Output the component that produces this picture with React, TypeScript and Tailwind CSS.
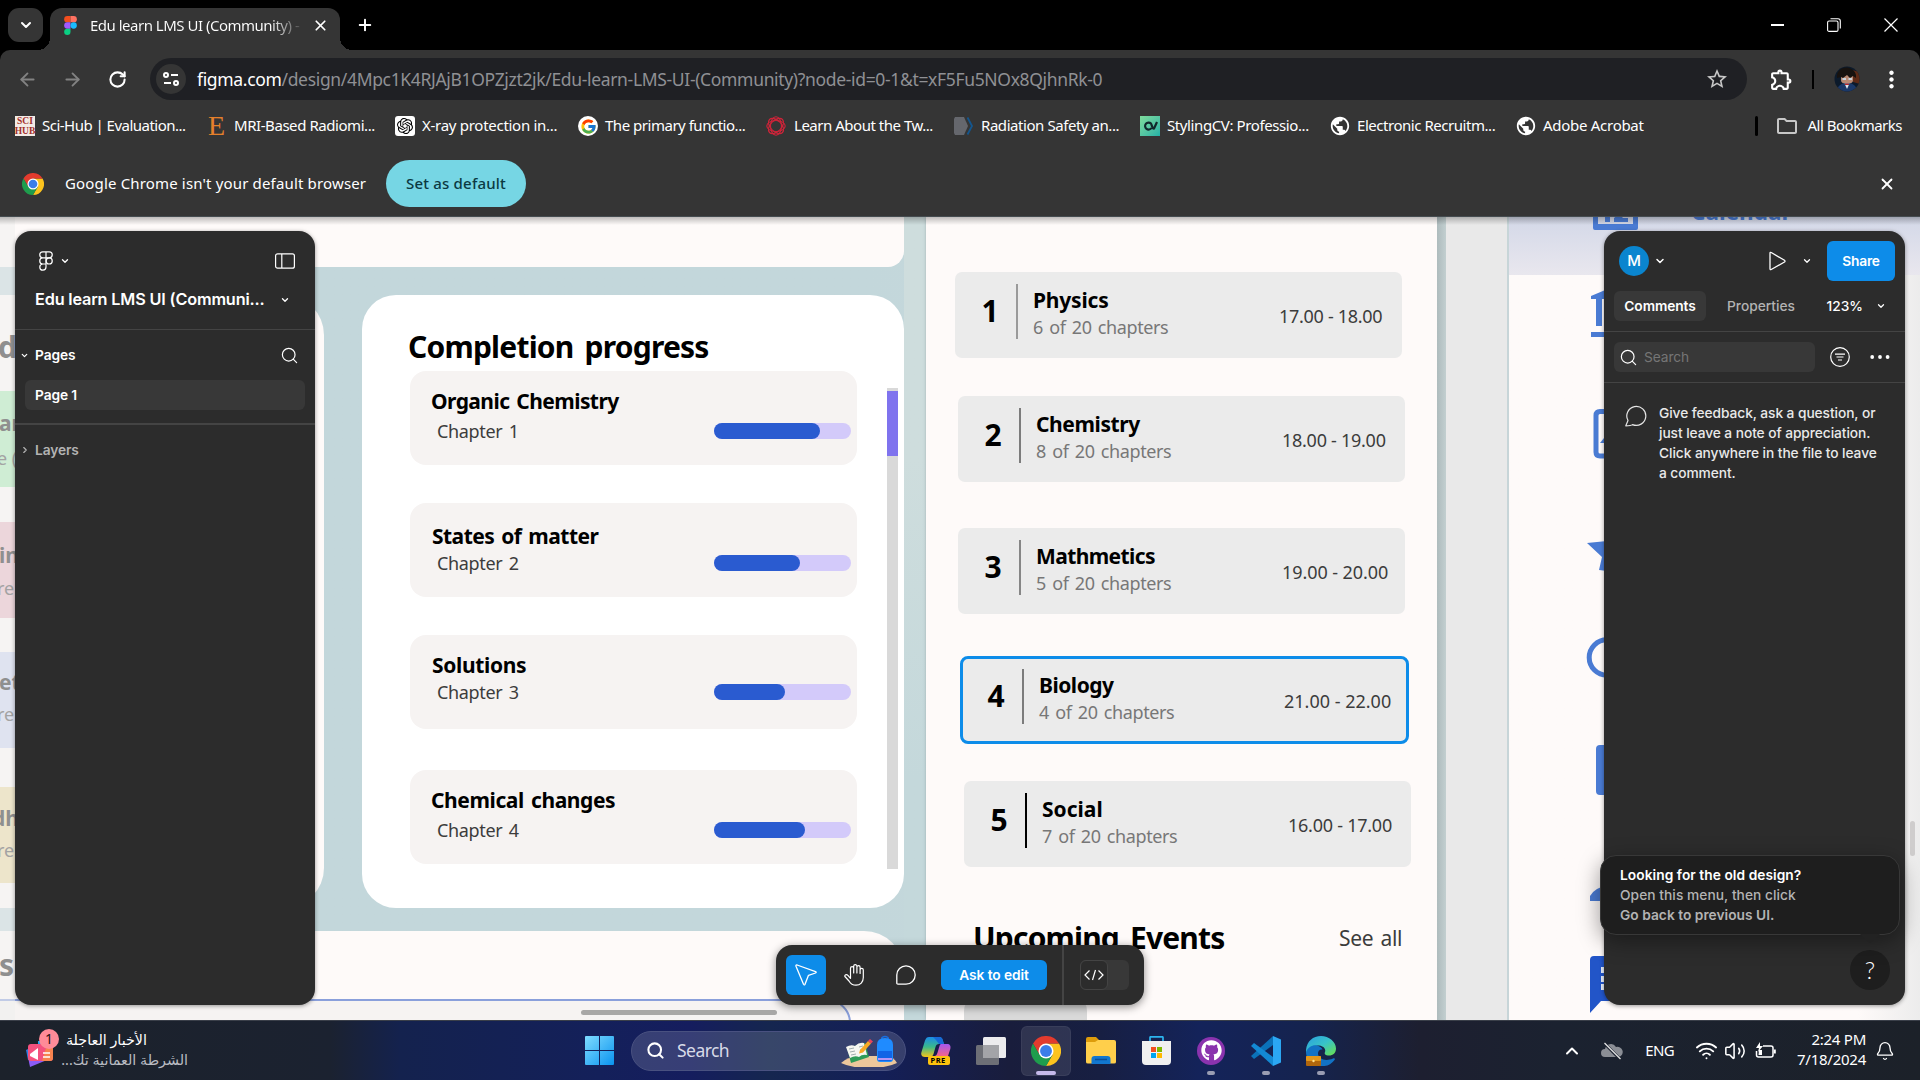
import React from "react";
import { ArrowLeft, ArrowRight, ChevronDown, ChevronRight, ChevronUp, Plus, RotateCw, Search, X, Bell, Wifi, Volume2 } from "lucide-react";
import { MdOutlineExtension, MdStarBorder, MdOutlineFolder, MdPublic, MdMoreVert } from "react-icons/md";
import { SiOpenai } from "react-icons/si";
import { FcGoogle } from "react-icons/fc";
import { FaGithub } from "react-icons/fa";

/* ---------- brand marks ---------- */

function FigmaMark({ className }: { className: string }) {
  return (
    <svg viewBox="0 0 12 18" className={className}>
      <path d="M3 0h3v6H3a3 3 0 0 1 0-6z" fill="#f24e1e" />
      <path d="M6 0h3a3 3 0 0 1 0 6H6z" fill="#ff7262" />
      <path d="M3 6h3v6H3a3 3 0 0 1 0-6z" fill="#a259ff" />
      <circle cx="9" cy="9" r="3" fill="#1abcfe" />
      <path d="M3 12h3v3a3 3 0 1 1-3-3z" fill="#0acf83" />
    </svg>
  );
}

function FigmaOutline() {
  return (
    <svg viewBox="0 0 14 20" className="h-5 w-3.5" fill="none" stroke="#fff" strokeWidth="1.2">
      <path d="M7 .8H3.8a3 3 0 0 0 0 6.1H7zM7 .8h3.2a3 3 0 0 1 0 6.1H7zM7 6.9H3.8a3 3 0 0 0 0 6.1H7zM3.8 13A3.1 3.1 0 1 0 7 16.100V13z" />
      <circle cx="10.200" cy="9.950" r="3.050" />
    </svg>
  );
}

function ChromeMark({ className }: { className: string }) {
  return (
    <svg viewBox="0 0 48 48" className={className}>
      <path d="M34.400 30 24 48A24 24 0 0 0 44.800 12H24z" fill="#fcc31e" />
      <path d="M3.200 12A24 24 0 0 1 44.800 12H24L13.600 30z" fill="#e33b2e" />
      <path d="M3.200 12 13.600 30 24 36l10.400-6L24 48A24 24 0 0 1 3.200 12z" fill="#1f9d4d" />
      <circle cx="24" cy="24" r="12" fill="#fff" />
      <circle cx="24" cy="24" r="9.500" fill="#3b7de9" />
    </svg>
  );
}

function VsCodeMark() {
  return (
    <svg viewBox="0 0 30 30" className="size-[30px]">
      <path d="M22 0 0 20l3 3L22 9z" fill="#0b72b9" />
      <path d="M0 10l3-3L22 21v9z" fill="#1389d3" />
      <path d="M22 0l8 3.500v23L22 30z" fill="#2ba7f3" />
    </svg>
  );
}

function EdgeMark() {
  return (
    <svg viewBox="0 0 30 30" className="size-[30px]">
      <defs>
        <linearGradient id="edgeTop" x1="0" x2="1" y1="0" y2="1">
          <stop offset="0" stopColor="#2a9fe0" />
          <stop offset=".5" stopColor="#38c3c8" />
          <stop offset="1" stopColor="#6be04a" />
        </linearGradient>
      </defs>
      <path d="M0 14C1 5 7 0 15 0s15 6 15 12.500c0 4.500-3 7-7 7-3.500 0-5-1.500-4-3.500 1-2.500-1-6-6-6.500C8 9 3 12 0 18z" fill="url(#edgeTop)" />
      <path d="M0 16c2-5 7-7.500 11-6.500 3 .5 5 2.500 5.500 4-3-.5-4.500 1.500-4.500 4 0 5 7 8.500 15 5 1.500-.5 2.500 0 1.500 1.500A15 15 0 0 1 15 30C6 30 0 24 0 16z" fill="#1272c4" />
      <rect x="0" y="20" width="15" height="10" rx="1" fill="#b0660c" />
      <rect x="0" y="20" width="15" height="5" rx="1" fill="#e3971a" />
      <circle cx="7.500" cy="25" r="1.200" fill="#ffe08a" />
    </svg>
  );
}

function CopilotMark() {
  return (
    <svg viewBox="0 0 30 30" className="h-[30px] w-[30px]">
      <defs>
        <linearGradient id="copA" x1="0" x2="0" y1="0" y2="1">
          <stop offset="0" stopColor="#1b8ce8" />
          <stop offset=".5" stopColor="#3bb98a" />
          <stop offset="1" stopColor="#f5c518" />
        </linearGradient>
        <linearGradient id="copB" x1="0" x2="0" y1="0" y2="1">
          <stop offset="0" stopColor="#a557f0" />
          <stop offset="1" stopColor="#f2668a" />
        </linearGradient>
      </defs>
      <path d="M8 1h10c3 0 3.500 2 4 4l1 3h-5c-2 0-3 1-3.500 3l-2 7c-.5 2-2 3-4 3H4c-3 0-4.500-2-3.500-5L4 4.500C5 2 6 1 8 1z" fill="url(#copA)" />
      <path d="M12 1h6c3 0 3.500 2 4 4l1 3h-5l-3-4z" fill="#1769d6" />
      <path d="M20 8h6c3 0 4 2 3.300 5L27 20H14c2-1 2-2 3-5l1.500-5c.3-1 .7-2 1.500-2z" fill="url(#copB)" />
      <rect x="7" y="20" width="22" height="9" rx="2" fill="#fdc30d" />
    </svg>
  );
}

/* ---------- browser chrome ---------- */

function TabStrip() {
  return (
    <div className="flex h-[50px] bg-black pl-2 text-white">
      <div className="mt-2 flex h-[34px] w-[35px] items-center justify-center rounded-[11px] bg-[#353535]">
        <ChevronDown className="size-4" strokeWidth={3} />
      </div>
      <div className="relative ml-[7px] mt-2 flex h-[42px] w-[290px] items-center rounded-t-[12px] bg-[#353535] pl-[14px] pb-2">
        <div className="absolute -left-3 bottom-0 size-3 bg-[radial-gradient(circle_at_0_0,transparent_12px,#353535_12px)]" />
        <div className="absolute -right-3 bottom-0 size-3 bg-[radial-gradient(circle_at_100%_0,transparent_12px,#353535_12px)]" />
        <FigmaMark className="h-[19px] w-[13px]" />
        <div className="ml-[13px] w-[212px] whitespace-nowrap bg-gradient-to-r from-white from-85% to-[#454545] bg-clip-text text-[15px] tracking-[-0.5px] text-transparent">
          Edu learn LMS UI (Community) -
        </div>
        <X className="ml-[10px] size-[17px]" strokeWidth={2.4} />
      </div>
      <Plus className="ml-[16px] mt-4 size-[18px]" strokeWidth={2.6} />
      <div className="ml-auto flex items-center pr-[22px]">
        <div className="h-[1.500px] w-[13px] bg-white" />
        <svg viewBox="0 0 14 14" className="ml-[43px] size-[14px]" fill="none" stroke="#fff" strokeWidth="1.100">
          <rect x=".6" y="3" width="10.400" height="10.400" rx="1.500" />
          <path d="M3.500 .7h7.500a2.300 2.300 0 0 1 2.300 2.300v7.500" />
        </svg>
        <svg viewBox="0 0 14 14" className="ml-[43px] size-[14px]" stroke="#fff" strokeWidth="1.200">
          <path d="M.5 .5l13 13M13.500 .5l-13 13" />
        </svg>
      </div>
    </div>
  );
}

function AddressBar() {
  return (
    <div className="flex h-[58px] items-center rounded-t-[10px] bg-[#353535] pl-[17px]">
      <ArrowLeft className="size-[21px] text-[#828282]" strokeWidth={2.1} />
      <ArrowRight className="ml-[24px] size-[21px] text-[#828282]" strokeWidth={2.1} />
      <RotateCw className="ml-[25px] size-[19px] text-white" strokeWidth={2.6} />
      <div className="ml-[23px] flex h-[42px] w-[1597px] items-center rounded-full bg-[#1f2024] pl-[6px]">
        <div className="flex size-[30px] items-center justify-center rounded-full bg-[#353535]">
          <svg viewBox="0 0 16 14" className="h-[14px] w-4" fill="none" stroke="#fff" strokeWidth="2">
            <circle cx="3" cy="3" r="2" />
            <path d="M8 3h7M1 11h7" />
            <circle cx="13" cy="11" r="2" />
          </svg>
        </div>
        <div className="ml-[11px] whitespace-nowrap text-[17.500px] tracking-[-0.335px] text-[#8f9094]">
          <span className="text-white">figma.com</span>/design/4Mpc1K4RJAjB1OPZjzt2jk/Edu-learn-LMS-UI-(Community)?node-id=0-1&amp;t=xF5Fu5NOx8QjhnRk-0
        </div>
        <MdStarBorder className="ml-auto mr-[18px] size-[24px] text-[#c7c7c7]" />
      </div>
      <MdOutlineExtension className="ml-[22px] size-[25px] text-white" />
      <div className="ml-[18px] h-[19px] w-[2px] bg-black" />
      <svg viewBox="0 0 26 26" className="ml-5 size-[26px]">
        <defs>
          <clipPath id="avatarClip"><circle cx="13" cy="13" r="12.500" /></clipPath>
        </defs>
        <g clipPath="url(#avatarClip)">
          <rect width="26" height="26" fill="#0c1a2b" />
          <path d="M18 4l8 2v12l-7-2z" fill="#5e2a16" />
          <path d="M7 9h12v5c0 3-3 4-6 4s-6-1-6-4z" fill="#b98a74" />
          <path d="M3 12C2 5 8 1 13 1.500S23 6 22 12l-3-2-3 2-3-3-4 3-2-1z" fill="#17120f" />
          <path d="M8.500 12h3.500v2H8.500zM14.500 12H18v2h-3.500z" fill="#c9d3dc" />
          <path d="M3 26c0-6 4-9 10-9s10 3 10 9z" fill="#1b3868" />
          <path d="M10.500 17.500h5L13 23z" fill="#dfe6ee" />
          <path d="M11 17.500h4v1.500h-4z" fill="#b2272d" />
        </g>
      </svg>
      <MdMoreVert className="ml-[18px] size-[27px] text-white" />
    </div>
  );
}

function Globe() {
  return <MdPublic className="size-[22px] text-white" />;
}

const bookmarks = [
  {
    box: "w-[193px]",
    gap: "ml-[7px] tracking-[-0.52px]",
    text: "Sci-Hub | Evaluation...",
    icon: (
      <div className="flex size-5 flex-col items-center justify-center bg-[#f3ebe6] font-[Liberation_Serif] text-[9.500px] font-bold leading-[10px] text-[#a3302b]">
        <span>SCI</span>
        <span>HUB</span>
      </div>
    ),
  },
  { box: "w-[187px]", gap: "ml-[8px] tracking-[-0.44px]", text: "MRI-Based Radiomi...", icon: <div className="w-[18px] font-[Liberation_Serif] text-[28px] leading-5 text-[#e5802b]">E</div> },
  {
    box: "w-[183px]",
    gap: "ml-[7px] tracking-[-0.28px]",
    text: "X-ray protection in...",
    icon: (
      <div className="flex size-5 items-center justify-center rounded-[3px] bg-white">
        <SiOpenai className="size-[16px] text-black" />
      </div>
    ),
  },
  {
    box: "w-[188px]",
    gap: "ml-[7px] tracking-[-0.48px]",
    text: "The primary functio...",
    icon: (
      <div className="flex size-5 items-center justify-center rounded-full bg-white">
        <FcGoogle className="size-[17px]" />
      </div>
    ),
  },
  {
    box: "w-[188px]",
    gap: "ml-[8px] tracking-[-0.48px]",
    text: "Learn About the Tw...",
    icon: (
      <svg viewBox="0 0 20 20" className="size-5" fill="none" stroke="#cf2439" strokeWidth="1.100">
        <ellipse cx="10" cy="10" rx="9.200" ry="5.500" />
        <ellipse cx="10" cy="10" rx="9.200" ry="5.500" transform="rotate(45 10 10)" />
        <ellipse cx="10" cy="10" rx="9.200" ry="5.500" transform="rotate(90 10 10)" />
        <ellipse cx="10" cy="10" rx="9.200" ry="5.500" transform="rotate(135 10 10)" />
      </svg>
    ),
  },
  {
    box: "w-[186px]",
    gap: "ml-[7px] tracking-[-0.44px]",
    text: "Radiation Safety an...",
    icon: (
      <svg viewBox="0 0 20 20" className="size-5">
        <path d="M1 1h9l4 9-4 9H1L0 17V3z" fill="#65676d" />
        <path d="M13.500 1.500 18 10l-4.500 8.500" fill="none" stroke="#13568f" strokeWidth="1.800" />
      </svg>
    ),
  },
  {
    box: "w-[190px]",
    gap: "ml-[7px] tracking-[-0.4px]",
    text: "StylingCV: Professio...",
    icon: (
      <div className="flex size-5 items-center justify-center bg-gradient-to-br from-[#7fdc9c] to-[#1fb2a6]">
        <svg viewBox="0 0 16 10" className="h-[10px] w-4" fill="none" stroke="#12272c" strokeWidth="2.200">
          <path d="M9.500 7A3.500 3.500 0 1 1 9 2.500C10 4 10 8 12 7.500L15 1" />
        </svg>
      </div>
    ),
  },
  { box: "-ml-[1px] w-[186px]", gap: "ml-[6px] tracking-[-0.46px]", text: "Electronic Recruitm...", icon: <Globe /> },
  { box: "w-[160px]", gap: "ml-[6px] tracking-[-0.28px]", text: "Adobe Acrobat", icon: <Globe /> },
];

function BookmarksBar() {
  return (
    <div className="flex h-9 items-center bg-[#353535] pl-[15px] text-[15px] text-white">
      {bookmarks.map((b) => (
        <div key={b.text} className={"flex shrink-0 items-center whitespace-nowrap " + b.box}>
          {b.icon}
          <span className={"-mt-[2px] " + b.gap}>{b.text}</span>
        </div>
      ))}
      <div className="ml-auto mr-[17px] h-5 w-[3px] rounded-full bg-black" />
      <MdOutlineFolder className="size-6 text-[#c7c7c7]" />
      <span className="-mt-[2px] ml-[9px] mr-[18px] tracking-[-0.5px]">All Bookmarks</span>
    </div>
  );
}

function InfoBar() {
  return (
    <div className="flex h-[73px] items-center border-b border-[#454c50] bg-[#353535] pl-[22px] pr-6 pt-[7px] text-[15px] text-white">
      <ChromeMark className="size-[22px]" />
      <span className="ml-[21px] w-[321px] whitespace-nowrap tracking-[0.16px]">Google Chrome isn't your default browser</span>
      <div className="flex h-[47px] w-[140px] items-center justify-center rounded-full bg-[#76d6e4] font-medium tracking-[0.2px] text-[#0b3a42]">Set as default</div>
      <X className="ml-auto size-[18px]" strokeWidth={2.4} />
    </div>
  );
}

/* ---------- design canvas ---------- */

const chapters = [
  { pos: "left-[410px] top-[154px]", title: "Organic Chemistry", titleAt: "left-[21px] top-[20px] tracking-[-0.57px]", sub: "Chapter 1", subAt: "top-[51px]", barAt: "top-[52px]", fill: "w-[106px]" },
  { pos: "left-[410px] top-[286px]", title: "States of matter", titleAt: "left-[22px] top-[23px] tracking-[-0.53px]", sub: "Chapter 2", subAt: "top-[51px]", barAt: "top-[52px]", fill: "w-[86px]" },
  { pos: "left-[410px] top-[418px]", title: "Solutions", titleAt: "left-[22px] top-[20px] tracking-[-0.35px]", sub: "Chapter 3", subAt: "top-[48px]", barAt: "top-[49px]", fill: "w-[71px]" },
  { pos: "left-[410px] top-[553px]", title: "Chemical changes", titleAt: "left-[21px] top-[20px] tracking-[-0.4px]", sub: "Chapter 4", subAt: "top-[51px]", barAt: "top-[52px]", fill: "w-[91px]" },
];

const lessons = [
  { pos: "left-[955px] top-[55px]", n: "1", rule: "bg-[#9a9a9a]", title: "Physics", titleGap: "tracking-[-0.2px]", sub: "6 of 20 chapters", time: "17.00 - 18.00", timeAt: "left-[324px] tracking-[-0.3px]" },
  { pos: "left-[958px] top-[179px]", n: "2", rule: "bg-[#7c7c7c]", title: "Chemistry", titleGap: "tracking-[-0.4px]", sub: "8 of 20 chapters", time: "18.00 - 19.00", timeAt: "left-[324px] tracking-[-0.27px]" },
  { pos: "left-[958px] top-[311px]", n: "3", rule: "bg-[#868686]", title: "Mathmetics", titleGap: "tracking-[-0.6px]", sub: "5 of 20 chapters", time: "19.00 - 20.00", timeAt: "left-[324px] tracking-[-0.08px]" },
  { pos: "left-[961px] top-[440px] outline-[3px] outline-[#0d8ce9] outline-offset-[-2px]", n: "4", rule: "bg-[#7c7c7c]", title: "Biology", titleGap: "tracking-[-0.5px]", sub: "4 of 20 chapters", time: "21.00 - 22.00", timeAt: "left-[323px]" },
  { pos: "left-[964px] top-[564px]", n: "5", rule: "bg-black", title: "Social", titleGap: "tracking-[0px]", sub: "7 of 20 chapters", time: "16.00 - 17.00", timeAt: "left-[324px] tracking-[-0.25px]" },
];

const hiddenCards = [
  { at: "top-[174px] bg-[#cfedd4]", a: "ar", aAt: "-left-[1px] top-[22px]", b: "e (", bAt: "-left-[3px] top-[58px]" },
  { at: "top-[305px] bg-[#ecd6db]", a: "in", aAt: "-left-[1px] top-[23px]", b: "re", bAt: "-left-[3px] top-[57px]" },
  { at: "top-[435px] bg-[#dfe3f0]", a: "et", aAt: "-left-[1px] top-[20px]", b: "re", bAt: "-left-[3px] top-[53px]" },
  { at: "top-[570px] bg-[#ede5cb]", a: "dh", aAt: "-left-[8px] top-[21px]", b: "re", bAt: "-left-[3px] top-[54px]" },
];

function Canvas() {
  return (
    <div className="absolute inset-0 overflow-hidden bg-[#e9e9e9] text-black">
      {/* main frame */}
      <div className="absolute left-0 top-0 h-full w-[1446px] bg-gradient-to-r from-[#c3d7db] from-60% to-[#cbdadb]" />
      <div className="absolute left-[904px] top-0 h-full w-[22px] bg-gradient-to-b from-[#cedddd] from-30% to-[#c4d8db] to-70%" />
      <div className="absolute -left-10 top-0 h-[50px] w-[944px] rounded-br-[16px] bg-[#fefaf9]" />
      <div className="absolute -left-10 top-[78px] h-[613px] w-[364px] rounded-[40px] bg-[#fefaf9]" />
      <div className="absolute -left-10 top-[714px] h-[120px] w-[944px] rounded-tr-[40px] bg-[#fefaf9]" />
      <div className="absolute -left-10 top-[782px] h-[60px] w-[891px] rounded-tr-[24px] border-2 border-[#8a9fdb] bg-[#f6f3f2]" />

      {/* strip visible left of the panel */}
      <div className="absolute left-0 top-0 h-full w-[15px] overflow-hidden whitespace-nowrap text-[#8f8f8f]">
        <div className="absolute inset-0 bg-[#eeeeee]/55" />
        <div className="absolute -right-[2px] top-[115px] text-[30px] font-bold leading-none">rd</div>
        {hiddenCards.map((c) => (
          <div key={c.a} className={"absolute left-0 h-[96px] w-full " + c.at}>
            <div className={"absolute text-[21px] font-bold leading-none " + c.aAt}>{c.a}</div>
            <div className={"absolute text-[18px] leading-none text-[#a3a3a3] " + c.bAt}>{c.b}</div>
          </div>
        ))}
        <div className="absolute right-[1px] top-[733px] text-[30px] font-bold leading-none">s</div>
      </div>

      {/* completion progress */}
      <div className="absolute left-[362px] top-[78px] h-[613px] w-[542px] rounded-[34px] bg-white" />
      <div className="absolute left-[408px] top-[115px] whitespace-nowrap text-[30px] font-bold leading-none tracking-[-0.78px] [word-spacing:4px]">Completion progress</div>
      {chapters.map((c) => (
        <div key={c.title} className={"absolute h-[94px] w-[447px] rounded-[16px] bg-[#f6f3f2] " + c.pos}>
          <div className={"absolute whitespace-nowrap text-[21px] font-bold leading-none [word-spacing:2px] " + c.titleAt}>{c.title}</div>
          <div className={"absolute left-[27px] whitespace-nowrap text-[18px] leading-none tracking-[-0.35px] text-[#3c3c3c] [word-spacing:2px] " + c.subAt}>{c.sub}</div>
          <div className={"absolute left-[304px] h-4 w-[137px] rounded-full bg-[#d3cafa] " + c.barAt}>
            <div className={"h-4 rounded-full bg-[#2a5bd0] " + c.fill} />
          </div>
        </div>
      ))}
      <div className="absolute left-[887px] top-[171px] h-[481px] w-[11px] bg-[#d9d9d9] pt-[3px]">
        <div className="h-[65px] bg-[#7f73ee]" />
      </div>

      {/* schedule column */}
      <div className="absolute left-[926px] top-0 h-full w-[511px] bg-[#fefaf9] shadow-[0_0_3px_rgba(90,100,110,0.35)]" />
      <div className="absolute left-[1437px] top-0 h-full w-[9px] bg-gradient-to-r from-[#aebbbd] to-[#c2cfd0]" />
      {lessons.map((l) => (
        <div key={l.n} className={"absolute h-[86px] w-[447px] rounded-[7px] bg-[#ebebeb] " + l.pos}>
          <div className="absolute left-[25px] top-[24px] w-[20px] text-center text-[30px] font-bold leading-none">{l.n}</div>
          <div className={"absolute left-[61px] top-[12px] h-[55px] w-[1.500px] " + l.rule} />
          <div className={"absolute left-[78px] top-[18px] whitespace-nowrap text-[21px] font-bold leading-none " + l.titleGap}>{l.title}</div>
          <div className="absolute left-[78px] top-[46px] whitespace-nowrap text-[18px] leading-none tracking-[-0.4px] text-[#777] [word-spacing:2px]">{l.sub}</div>
          <div className={"absolute top-[35px] whitespace-nowrap text-[18px] leading-none text-[#3c3c3c] " + l.timeAt}>{l.time}</div>
        </div>
      ))}
      <div className="absolute left-[973px] top-[706px] whitespace-nowrap text-[30px] font-bold leading-none tracking-[-0.82px] [word-spacing:4px]">Upcoming Events</div>
      <div className="absolute left-[1339px] top-[711px] whitespace-nowrap text-[21px] leading-none tracking-[-0.3px] text-[#3c3c3c] [word-spacing:2px]">See all</div>
      <div className="absolute left-[964px] top-[780px] h-[60px] w-[123px] rounded-[14px] bg-[#d9d9d9]" />

      {/* second frame */}
      <div className="absolute left-[1507px] top-0 h-full w-[413px] border-l-2 border-[#c7d5d8] bg-gradient-to-r from-[#fefaf9] from-85% to-[#ececec]" />
      <div className="absolute left-[1509px] top-0 h-[58px] w-[411px] bg-gradient-to-b from-[#d3d8e8] to-[#e9e7ee]" />
      <div className="absolute left-[1691px] -top-[16px] text-[22.500px] font-bold leading-none text-[#4a7bd3]">Calendar</div>
      <svg viewBox="1580 217 60 803" className="absolute left-[1580px] top-0 h-[803px] w-[60px]" fill="#4a7bd3">
        <path d="M1593 210v18q0 2 2 2h41q2 0 2-2v-18h-5v14h-35v-14z" />
        <path d="M1605 210h5v12h-5zM1614 222v-4l8-6h6l-6 6h6v4z" />
        <path d="M1591 296l19-8v11h-8v27h-6v-27h-5zM1591 332h20v5h-20z" />
        <path d="M1600 411.500h20v44.500h-20q-4 0-4-4v-36.500q0-4 4-4z" fill="none" stroke="#4a7bd3" strokeWidth="5" />
        <path d="M1600 443l8-10v10z" />
        <path d="M1587 543l20-2v30l-8-1 3-13z" />
        <circle cx="1607" cy="657.500" r="17.800" fill="none" stroke="#4a7bd3" strokeWidth="5" />
        <rect x="1596" y="745" width="20" height="50" rx="4" />
        <path d="M1590 901v-5q4-8 20-12v17z" />
        <path d="M1594 956h30v45h-23l-11 12v-53q0-4 4-4z" fill="#2255c8" />
        <path d="M1601 967h6v6h-6zM1601 976h6v6h-6zM1601 984h6v6h-6z" fill="#e6ecf8" />
      </svg>
      <div className="absolute inset-x-0 top-0 h-[8px] bg-gradient-to-b from-black/25 to-transparent" />
      <div className="absolute left-[581px] top-[793px] h-[5px] w-[196px] rounded-full bg-[#a8a7a6]" />
      <div className="absolute left-[1910px] top-[604px] h-[35px] w-[5px] rounded-full bg-[#cfcdcd]" />
    </div>
  );
}

/* ---------- editor panels ---------- */

function LeftPanel() {
  return (
    <div className="absolute left-[15px] top-[14px] flex h-[774px] w-[300px] flex-col rounded-[16px] bg-[#2c2c2c] font-[Inter] text-[13.750px] font-semibold tracking-[-0.1px] text-white shadow-[0_1px_4px_rgba(0,0,0,0.4)]">
      <div className="flex h-[60px] items-center pl-6 pr-5">
        <FigmaOutline />
        <ChevronDown className="ml-[7px] size-[10px]" strokeWidth={3.200} />
        <svg viewBox="0 0 20 16" className="ml-auto h-4 w-5" fill="none" stroke="#fff" strokeWidth="1.200">
          <rect x=".6" y=".8" width="18.800" height="14.400" rx="2" />
          <path d="M6.800 1v14" />
        </svg>
      </div>
      <div className="flex h-[39px] items-start border-b border-[#444] pl-5 pr-[25px] text-[16.250px] leading-[18px]">
        <span className="-mt-px whitespace-nowrap tracking-[-0.17px]">Edu learn LMS UI (Communi...</span>
        <ChevronDown className="ml-auto mt-1 size-[10px]" strokeWidth={3.200} />
      </div>
      <div className="flex h-[50px] items-center pl-[5px] pr-[16px]">
        <ChevronDown className="size-[9px]" strokeWidth={3.200} />
        <span className="ml-[6px]">Pages</span>
        <Search className="ml-auto size-[19px]" strokeWidth={1.500} />
      </div>
      <div className="mx-[10px] flex h-[30px] items-center rounded-[6px] bg-[#383838] pl-[10px]">Page 1</div>
      <div className="mt-[13px] h-[2px] bg-[#444]" />
      <div className="flex h-[50px] items-center pl-[5px] text-[#b3b3b3]">
        <ChevronRight className="size-[10px]" strokeWidth={2.800} />
        <span className="ml-[5px]">Layers</span>
      </div>
    </div>
  );
}

function RightPanel() {
  return (
    <div className="absolute left-[1604px] top-[14px] flex h-[774px] w-[301px] flex-col rounded-[16px] bg-[#2c2c2c] font-[Inter] text-[13.750px] font-medium tracking-[-0.1px] text-white shadow-[0_1px_4px_rgba(0,0,0,0.4)]">
      <div className="flex h-[60px] items-center pl-[15px] pr-[10px]">
        <div className="flex size-[30px] items-center justify-center rounded-full bg-[#0a85cf] text-[15px]">M</div>
        <ChevronDown className="ml-[5px] size-[12px]" strokeWidth={3} />
        <svg viewBox="0 0 17 20" className="ml-auto h-5 w-[17px]" fill="none" stroke="#fff" strokeWidth="1.300" strokeLinejoin="round">
          <path d="M1 2.200v15.600q0 1.300 1.200 .7L15.500 11q1-.9 0-1.700L2.200 1.500Q1 1 1 2.200z" />
        </svg>
        <ChevronDown className="ml-[16px] mr-[15px] size-[10px]" strokeWidth={3} />
        <div className="flex h-10 w-[68px] items-center justify-center rounded-[6px] bg-[#0d8ce9] font-semibold tracking-[-0.2px]">Share</div>
      </div>
      <div className="flex h-[41px] border-b border-[#444] pl-[10px] pr-[19px]">
        <div className="flex h-[30px] w-[92px] items-center justify-center rounded-[6px] bg-[#383838] font-semibold tracking-[-0.1px]">Comments</div>
        <div className="ml-[21px] flex h-[30px] items-center tracking-[0px] text-[#b3b3b3]">Properties</div>
        <div className="ml-auto flex h-[30px] items-center tracking-[0px]">123%</div>
        <ChevronDown className="ml-[13px] mt-[10px] size-[10px]" strokeWidth={3} />
      </div>
      <div className="flex h-[51px] items-center border-b border-[#444] pl-[10px]">
        <div className="flex h-[30px] w-[201px] items-center rounded-[6px] bg-[#383838] pl-[5px] font-normal text-[#757575]">
          <Search className="size-[19px] text-white" strokeWidth={1.500} />
          <span className="ml-[6px]">Search</span>
        </div>
        <svg viewBox="0 0 20 20" className="ml-[15px] size-5" fill="none" stroke="#fff" strokeWidth="1.200">
          <circle cx="10" cy="10" r="9.300" />
          <path d="M5 7.200h10M6.500 10h7M8 13h4" />
        </svg>
        <svg viewBox="0 0 20 4" className="ml-5 h-1 w-5" fill="#fff">
          <circle cx="2.200" cy="2" r="1.900" />
          <circle cx="10" cy="2" r="1.900" />
          <circle cx="17.600" cy="2" r="1.900" />
        </svg>
      </div>
      <div className="flex pl-[21px] pt-[20px]">
        <svg viewBox="0 0 22 22" className="mt-[2px] size-[22px]" fill="none" stroke="#e5e5e5" strokeWidth="1.200" strokeLinejoin="round">
          <path d="M.8 20.800 3 15.500A9.500 9.500 0 1 1 7.500 19.600Q6 20.800 .8 20.800z" />
        </svg>
        <div className="ml-[12px] whitespace-nowrap leading-5 tracking-[-0.07px] text-[#e9e9e9]">
          Give feedback, ask a question, or
          <br />
          just leave a note of appreciation.
          <br />
          Click anywhere in the file to leave
          <br />a comment.
        </div>
      </div>
      <div className="mb-[15px] ml-auto mr-[15px] mt-auto flex size-10 items-center justify-center rounded-full bg-[#1e1e1e] font-[Lato] text-[24px] font-light">?</div>
    </div>
  );
}

function Hint() {
  return (
    <div className="absolute left-[1600px] top-[638px] h-[80px] w-[300px] rounded-[16px] border border-[#383838] bg-[#1e1e1e] pl-[19px] pt-[9px] font-[Inter] text-[13.750px] leading-5 text-[#b3b3b3] shadow-[0_6px_22px_rgba(0,0,0,0.4)]">
      <div className="font-semibold tracking-[0.05px] text-white">Looking for the old design?</div>
      <div className="font-medium tracking-[0.05px]">Open this menu, then click</div>
      <div className="font-semibold tracking-[0.02px]">Go back to previous UI.</div>
      <svg viewBox="0 0 20 9" className="absolute left-[259px] top-[78px] h-[9px] w-5" fill="#222">
        <path d="M0 0h20l-8 8q-2 1.500-4 0z" />
      </svg>
    </div>
  );
}

function ToolBar() {
  return (
    <div className="absolute left-[776px] top-[728px] flex h-[60px] w-[368px] items-center rounded-[16px] bg-[#2c2c2c] pl-[10px] font-[Inter] text-white shadow-[0_2px_8px_rgba(0,0,0,0.45)]">
      <div className="flex size-10 items-center justify-center rounded-[6px] bg-[#0d8ce9]">
        <svg viewBox="0 0 22 22" className="size-[22px]" fill="none" stroke="#fff" strokeWidth="1.300" strokeLinejoin="round">
          <path d="M1 2.200Q.5 .6 2.100 1L20.500 7.600q1.400.7 0 1.400l-7 2.300-3.500 9q-.8 1.300-1.500 0z" />
        </svg>
      </div>
      <svg viewBox="0 0 22 22" className="ml-[18px] size-[22px]" fill="none" stroke="#fff" strokeWidth="1.200" strokeLinecap="round" strokeLinejoin="round">
        <path d="M6.500 11.500V4.200a1.600 1.600 0 0 1 3.200 0V9M9.700 9V2.300a1.600 1.600 0 0 1 3.200 0V9M12.900 9V3.300a1.600 1.600 0 0 1 3.200 0V9.500M16.100 9V6a1.600 1.600 0 0 1 3.200 0v7.500c0 4.500-3 7.700-7.300 7.700-4 0-5.500-1.500-7-4.200L.9 12.500c-.5-1.500 1.500-2.700 3-1.200l2.600 3v-3" />
      </svg>
      <svg viewBox="0 0 20 20" className="ml-[30px] size-5" fill="none" stroke="#fff" strokeWidth="1.300">
        <path d="M.8 18V10A9.200 9.200 0 1 1 10 19.200H2Q.8 19.200 .8 18z" />
      </svg>
      <div className="ml-[25px] flex h-[30px] w-[106px] items-center justify-center rounded-[6px] bg-[#0d8ce9] text-[13.750px] font-semibold tracking-[-0.1px]">Ask to edit</div>
      <div className="ml-[15px] h-full w-[2px] bg-[#444]" />
      <div className="ml-4 h-[30px] w-[49px] rounded-[6px] bg-[#383838]">
        <div className="flex h-[30px] w-[28px] items-center justify-center rounded-[6px] border border-[#444] bg-[#2c2c2c]">
          <svg viewBox="0 0 20 12" className="h-3 w-5" fill="none" stroke="#fff" strokeWidth="1.200">
            <path d="M5.500 1.500 1 6l4.500 4.500M14.500 1.500 19 6l-4.500 4.500M11.500 1l-3 10" />
          </svg>
        </div>
      </div>
    </div>
  );
}

/* ---------- windows taskbar ---------- */

function TaskApp({ children, active, running }: { children: React.ReactNode; active?: boolean; running?: boolean }) {
  return (
    <div className={"relative mr-[5px] flex h-[50px] w-[50px] items-center justify-center rounded-[6px] " + (active ? "border border-white/5 bg-white/10" : "")}>
      {children}
      {active && <div className="absolute bottom-0 h-1 w-5 rounded-full bg-[#c4b9ea]" />}
      {running && <div className="absolute bottom-[1px] h-1 w-2 rounded-full bg-[#9a9db3]" />}
    </div>
  );
}

function TaskBar() {
  return (
    <div className="flex h-[60px] items-center border-t border-[#3a3f49] bg-[linear-gradient(90deg,#1c222b_0px,#1b2230_330px,#14224e_400px,#14205a_600px,#151d5e_690px,#15264f_770px,#141f58_880px,#191d3c_1010px,#171f42_1100px,#14235a_1200px,#15234e_1310px,#1d1f30_1420px,#1b2230_1560px,#1c2129_1920px)] text-white">
      <div className="flex w-[585px] items-center pl-[26px]">
        <div className="relative -mt-[4px] h-9 w-[29px]">
          <svg viewBox="0 0 28 28" className="absolute bottom-0 left-0 size-[28px]">
            <path d="M2 18l19 3-17 7z" fill="#8b5cf6" />
            <path d="M0 11l4-2v12H2z" fill="#2f7de0" />
            <path d="M12 2h8v6h-8z" fill="#22a6f2" />
            <rect x="2" y="5" width="25" height="17" rx="3" fill="#f4517f" />
            <path d="M20 9h7v10a3 3 0 0 1-3 3h-8z" fill="#f7834f" />
            <path d="M4 15l8-6v12l-8-4z" fill="#fff" />
            <path d="M17 14h7M17 18h7" stroke="#fff" strokeWidth="1.600" />
          </svg>
          <div className="absolute -top-[2px] left-[13px] flex size-5 items-center justify-center rounded-full bg-[#ff8b98] text-[14px] text-[#2a1012]">1</div>
        </div>
        <div className="-mt-[2px] ml-[10px] w-[123px] whitespace-nowrap text-[14.300px] leading-5">
          <div dir="rtl" className="w-[82px]">الأخبار العاجلة</div>
          <div dir="rtl" className="w-[123px] text-[#b9bcc2]">الشرطة العمانية تك...</div>
        </div>
      </div>
      <svg viewBox="0 0 29 29" className="size-[29px]">
        <defs>
          <linearGradient id="winGrad" x1="0" x2="1" y1="0" y2="1">
            <stop offset="0" stopColor="#7fdcff" />
            <stop offset="1" stopColor="#0a93ef" />
          </linearGradient>
        </defs>
        <path d="M0 1q0-1 1-1h13v14H0zM15 0h13q1 0 1 1v13H15zM0 15h14v14H1q-1 0-1-1zM15 15h14v13q0 1-1 1H15z" fill="url(#winGrad)" />
      </svg>
      <div className="ml-[17px] mr-[5px] flex h-10 w-[275px] items-center rounded-full border border-[#495180] bg-white/15 pl-[14px] text-[17.500px] text-[#d8dbe8]">
        <Search className="size-[19px] text-white" strokeWidth={2.600} />
        <span className="ml-[12px] tracking-[-0.55px]">Search</span>
        <svg viewBox="0 0 58 32" className="ml-auto mr-[7px] h-8 w-[58px]">
          <path d="M1 28q6-6 18-7h24q12 1 14 7-10 5-28 5T1 28z" fill="#ecc79b" />
          <path d="M7 13l18-5 4 14-18 6z" fill="#2e9c57" />
          <path d="M6 12q5-3 9-1 4-4 9-3l3 12q-5-1-8 2-4-2-9 1z" fill="#f5f6f0" />
          <path d="M9 14l5-1M10 17l5-1M11 20l5-1M19 12l4-1M20 15l4-1" stroke="#8a9a9a" strokeWidth=".8" />
          <path d="M20 15l8-9 3 2.500-8 9-4 1z" fill="#f7a823" />
          <path d="M28 6l2-2 3 2.500-2 2z" fill="#e8455a" />
          <path d="M42 4V2.500Q45 .5 48 2.500V4" fill="none" stroke="#1a6ee0" strokeWidth="1.500" />
          <path d="M37 10q0-7 8-7t8 7v14q0 3-3 3H40q-3 0-3-3z" fill="#1f8bff" />
          <path d="M38 16h14v8q0 2-2 2H40q-2 0-2-2z" fill="#1264e6" />
          <path d="M38 24h14" stroke="#c99bf5" strokeWidth="1.800" />
        </svg>
      </div>
      <TaskApp>
        <div className="relative">
          <CopilotMark />
          <span className="absolute bottom-[1px] left-[9.500px] text-[7.500px] font-bold leading-[9px] tracking-[0.5px] text-black">PRE</span>
        </div>
      </TaskApp>
      <TaskApp>
        <svg viewBox="0 0 30 28" className="h-7 w-[30px]">
          <rect x="7" y="0" width="23" height="21" rx="1.500" fill="#ececee" />
          <rect x="0" y="8" width="23" height="20" rx="1.500" fill="#6d6f76" />
          <rect x="7" y="8" width="16" height="13" fill="#a3a4a8" />
        </svg>
      </TaskApp>
      <TaskApp active>
        <ChromeMark className="size-[30px]" />
      </TaskApp>
      <TaskApp>
        <svg viewBox="0 0 30 27" className="h-[27px] w-[30px]">
          <path d="M0 2q0-2 2-2h8l3 3v4H0z" fill="#dd9c0b" />
          <path d="M0 5h9l3-2h16q2 0 2 2v20q0 1.500-2 1.500H2Q0 26.500 0 25z" fill="#ffcf4b" />
          <path d="M5.500 27v-5q0-3 3-3h13q3 0 3 3v5z" fill="#1277cf" />
          <path d="M9 22.500h12" stroke="#0a4f98" strokeWidth="1.500" />
        </svg>
      </TaskApp>
      <TaskApp>
        <svg viewBox="0 0 29 29" className="size-[29px]">
          <path d="M8 7V1.500q0-.7.700-.7h11.600q.7 0 .7.700V7" fill="none" stroke="#2cb4ee" strokeWidth="1.700" />
          <path d="M0 5h29v20q0 4-4 4H4q-4 0-4-4z" fill="#f0f0f0" />
          <path d="M9 11h5v5H9z" fill="#f25022" />
          <path d="M15 11h5v5h-5z" fill="#7fba00" />
          <path d="M9 17h5v5H9z" fill="#00a4ef" />
          <path d="M15 17h5v5h-5z" fill="#ffb900" />
        </svg>
      </TaskApp>
      <TaskApp running>
        <div className="flex size-7 items-center justify-center rounded-full bg-[#8a33ae]">
          <FaGithub className="size-[21px] text-white" />
        </div>
      </TaskApp>
      <TaskApp running>
        <VsCodeMark />
      </TaskApp>
      <TaskApp running>
        <EdgeMark />
      </TaskApp>
      <div className="ml-auto flex items-center pr-[25px]">
        <ChevronUp className="size-[20px]" strokeWidth={2.400} />
        <svg viewBox="0 0 22 18" className="ml-[19px] h-[18px] w-[22px]">
          <path d="M4 15a4 4 0 0 1 0-8 6 6 0 0 1 11-2 5 5 0 0 1 3 10z" fill="#8b8e95" />
          <path d="M3 1l16 16" stroke="#1b2230" strokeWidth="3" />
          <path d="M3.500 1l16 16" stroke="#e7e7e7" strokeWidth="1.300" />
        </svg>
        <span className="ml-[22px] text-[15px] tracking-[-0.6px]">ENG</span>
        <Wifi className="ml-[21px] size-[23px]" strokeWidth={2} />
        <Volume2 className="ml-[6px] size-[22px]" strokeWidth={1.700} />
        <svg viewBox="0 0 21 18" className="ml-[9px] h-[18px] w-[21px]" fill="none" stroke="#fff" strokeWidth="1.500">
          <path d="M8 4h8q2 0 2 2v7q0 2-2 2H3.500q-2 0-2-2V9" />
          <path d="M19.800 7.500v4" strokeWidth="2" />
          <path d="M4 8h3v5H3.500z" fill="#fff" stroke="none" />
          <path d="M5 0 1 6h3L3 10l5-6H5z" fill="#fff" stroke="none" />
        </svg>
        <div className="-mt-[3px] ml-[21px] text-right text-[15px] leading-5 tracking-[-0.25px]">
          <div>2:24 PM</div>
          <div>7/18/2024</div>
        </div>
        <Bell className="ml-[9px] size-[20px]" strokeWidth={1.600} />
      </div>
    </div>
  );
}

export default function App() {
  return (
    <div className="flex h-[1080px] w-[1920px] flex-col overflow-hidden bg-black font-['Noto_Sans','DejaVu_Sans',sans-serif]">
      <TabStrip />
      <AddressBar />
      <BookmarksBar />
      <InfoBar />
      <div className="relative min-h-0 flex-1">
        <Canvas />
        <LeftPanel />
        <RightPanel />
        <Hint />
        <ToolBar />
      </div>
      <TaskBar />
    </div>
  );
}
